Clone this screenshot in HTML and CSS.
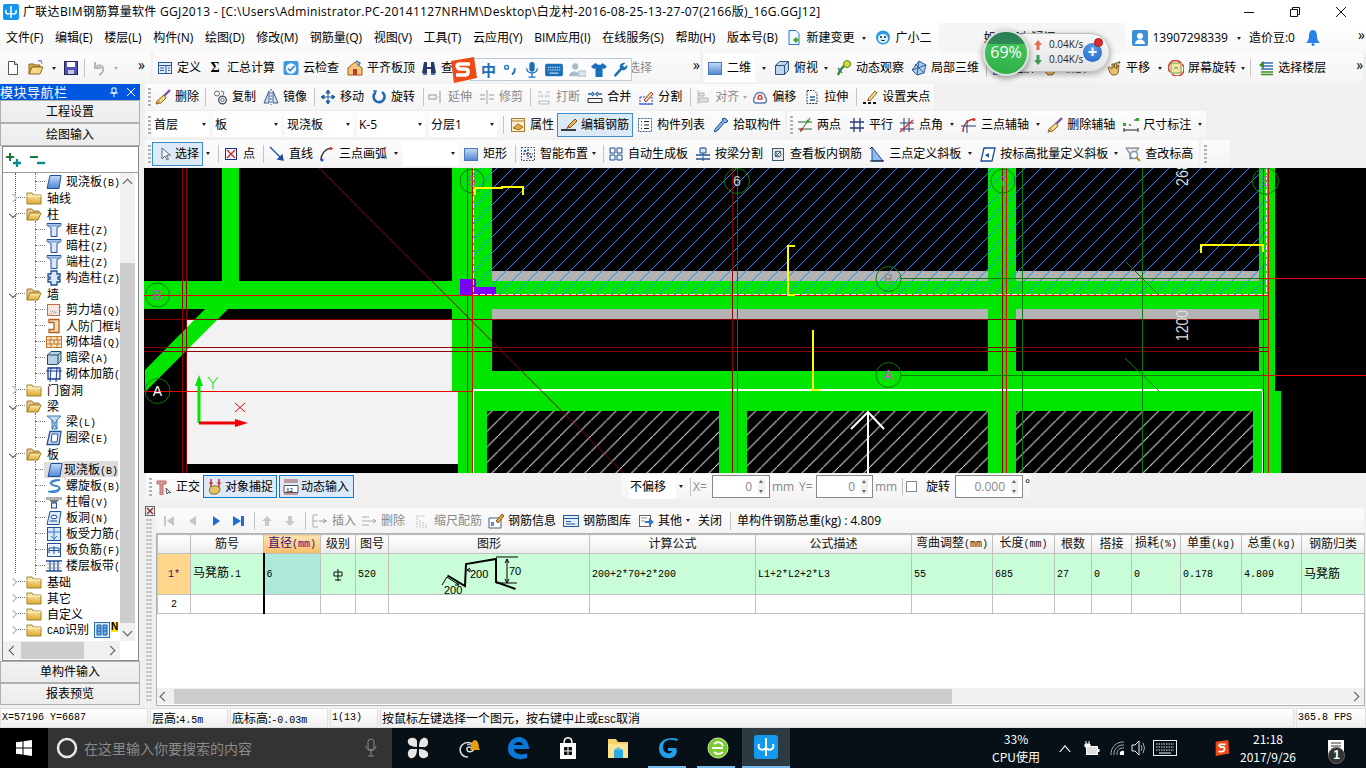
FILE: index.html
```html
<!DOCTYPE html>
<html lang="zh">
<head>
<meta charset="utf-8">
<title>广联达BIM钢筋算量软件 GGJ2013</title>
<link rel="stylesheet" href="styles.css">
</head>
<body>
<svg class="sprite" aria-hidden="true">
<defs>
<linearGradient id="gblue" x1="0" y1="0" x2="0" y2="1"><stop offset="0" stop-color="#c5dcf7"/><stop offset="1" stop-color="#4f86d0"/></linearGradient>
<linearGradient id="gfold" x1="0" y1="0" x2="0" y2="1"><stop offset="0" stop-color="#fdf0b0"/><stop offset="1" stop-color="#e0a830"/></linearGradient>
<pattern id="hb" width="16" height="16" patternUnits="userSpaceOnUse" x="2" y="7"><path d="M-1 17L17 -1" stroke="#1a8cff" stroke-width="1"/></pattern>
<pattern id="hw" width="15.5" height="15.5" patternUnits="userSpaceOnUse" x="2" y="2"><path d="M-1 16.5L16.5 -1" stroke="#d8d8d8" stroke-width="1"/></pattern>
<symbol id="new" viewBox="0 0 16 16"><path d="M3.5 1.5h6l3 3v10h-9z" fill="#fff" stroke="#555"/><path d="M9.5 1.5v3h3" fill="#ddd" stroke="#555"/></symbol>
<symbol id="open" viewBox="0 0 16 16"><path d="M1 4h5l1 1h5v2H4L1 14z" fill="#d9a93f" stroke="#8a6a20"/><path d="M4 7h11l-3 7H1z" fill="#f5d884" stroke="#8a6a20"/><path d="M10 1l3-.5 1 3" fill="none" stroke="#3a6fc0"/></symbol>
<symbol id="save" viewBox="0 0 16 16"><rect x="1.5" y="1.5" width="13" height="13" fill="#5252b8" stroke="#23235a"/><rect x="4" y="2" width="8" height="5" fill="#fff"/><rect x="5" y="10" width="6" height="4" fill="#c8c8dc"/></symbol>
<symbol id="undo" viewBox="0 0 16 16"><path d="M4 2v6h6" fill="none" stroke="#b8b8b8" stroke-width="2"/><path d="M4 8c4-5 9-2 8 2 0 2-2 4-4 5" fill="none" stroke="#b8b8b8" stroke-width="2"/></symbol>
<symbol id="def" viewBox="0 0 16 16"><rect x="1.5" y="2.5" width="13" height="11" fill="#e4eefa" stroke="#275a9c"/><path d="M2 5.5h12M9 6v7M3 8h4M3 10.5h4M11 8h2M11 10.5h2" stroke="#275a9c"/></symbol>
<symbol id="cloud" viewBox="0 0 16 16"><rect x="0.5" y="1" width="15" height="14" rx="2" fill="#3b98e2"/><circle cx="8" cy="8.5" r="5.2" fill="#eef6fd"/><path d="M5 8.5l2.2 2.2L11.5 6" fill="none" stroke="#2a80c8" stroke-width="1.6"/></symbol>
<symbol id="flat" viewBox="0 0 16 16"><path d="M1 8l7-6 7 6v7H1z" fill="#f4c777" stroke="#a05a12"/><path d="M6 9h4v6H6z" fill="#c0392b"/><path d="M9 1l4 2-2 3" fill="none" stroke="#3b7ac8" stroke-width="1.4"/></symbol>
<symbol id="bino" viewBox="0 0 16 16"><path d="M3 2h3v5h4V2h3l2 11h-5V9H6v4H1z" fill="#233a6a"/><path d="M2 13h4v2H2zM10 13h4v2h-4z" fill="#4d6da8"/></symbol>
<symbol id="sq" viewBox="0 0 16 16"><rect x="1.5" y="2.5" width="13" height="12" fill="url(#gblue)" stroke="#4b78b8"/></symbol>
<symbol id="box3" viewBox="0 0 16 16"><path d="M1.5 5.5l4-4h9v9l-4 4h-9z" fill="#bcd5f0" stroke="#33507a"/><path d="M1.5 5.5h9v9M10.5 5.5l4-4" fill="none" stroke="#33507a"/></symbol>
<symbol id="orbit" viewBox="0 0 16 16"><path d="M2 15C4 9 8 5 14 2" stroke="#3d8f1e" stroke-width="2.4" fill="none"/><circle cx="11" cy="4" r="3.5" fill="#e3d23c" stroke="#3d8f1e"/><path d="M2 8l4 5" stroke="#2a6fb8" stroke-width="1.5"/></symbol>
<symbol id="cube" viewBox="0 0 16 16"><path d="M8 1l7 4-2 8-7 2-5-5z" fill="#aacbeF" stroke="#2f5d99"/><path d="M8 1L6 15M1 10l14-5M4 4l9 9" stroke="#2f5d99" fill="none"/></symbol>
<symbol id="hand" viewBox="0 0 16 16"><path d="M3 10c-2-3 0-4 2-2l1 1V4h2v4l1-5h2l-1 6 2-4h1l-1 8c-1 2-3 2-5 2-2 0-3-2-4-5z" fill="#e8c16a" stroke="#7a5a20"/><path d="M13 1v3M11.5 2.5h3" stroke="#555"/></symbol>
<symbol id="scrot" viewBox="0 0 16 16"><rect x="3" y="3" width="10" height="10" fill="#f5e49c" stroke="#6aa04a"/><path d="M2 12A7 7 0 0 1 13 3" fill="none" stroke="#e0392b" stroke-width="1.5"/><path d="M14 4a7 7 0 0 1-10 10" fill="none" stroke="#e0392b" stroke-width="1.5"/><path d="M6 9l2-2 2 2" stroke="#3a7ac8" fill="none"/></symbol>
<symbol id="floors" viewBox="0 0 16 16"><path d="M3 3h12M3 6h12M3 9h12" stroke="#2f6fb8" stroke-width="1.6"/><path d="M3 12h12M3 14.5h12" stroke="#3d8f1e" stroke-width="1.6"/><path d="M6 1L1 5l5 4z" fill="#3d8f1e"/></symbol>
<symbol id="brush" viewBox="0 0 16 16"><path d="M15 1L8 8" stroke="#7a4fb0" stroke-width="2.4"/><path d="M9 6L2 12l-1 3 5-1 5-5z" fill="#f2d98a" stroke="#8a6a20"/><path d="M1 15l4-3" stroke="#c64" /></symbol>
<symbol id="copy" viewBox="0 0 16 16"><circle cx="5" cy="4.5" r="2.5" fill="none" stroke="#666"/><circle cx="10.5" cy="11" r="3.8" fill="none" stroke="#555" stroke-width="1.4"/><circle cx="10.5" cy="11" r="1.6" fill="none" stroke="#3d7ac0"/><path d="M9 2l3 1-1 3" fill="none" stroke="#3d7ac0"/></symbol>
<symbol id="mirror" viewBox="0 0 16 16"><path d="M6 2L1 14h5z" fill="#cfe0f3" stroke="#3a5d8a"/><path d="M10 2l5 12h-5z" fill="#cfe0f3" stroke="#3a5d8a"/><path d="M8 0v16" stroke="#3a5d8a" stroke-dasharray="2 1"/></symbol>
<symbol id="move" viewBox="0 0 16 16"><path d="M8 1v14M1 8h14M8 1L6 4h4zM8 15l-2-3h4zM1 8l3-2v4zM15 8l-3-2v4z" fill="#1f5f9e" stroke="#1f5f9e"/></symbol>
<symbol id="rot" viewBox="0 0 16 16"><path d="M11 3A5.5 5.5 0 1 1 4 4" fill="none" stroke="#1f67bb" stroke-width="2.6"/><path d="M2 1l4 .5L4.500 6z" fill="#1f67bb"/></symbol>
<symbol id="ext" viewBox="0 0 16 16"><path d="M1 6h7v4H1zM12 2v12" stroke="#b4b4b4" fill="none" stroke-width="1.4"/><path d="M8 8h3" stroke="#c8c8c8"/></symbol>
<symbol id="trim" viewBox="0 0 16 16"><path d="M1 6h5M1 10h5M10 6h5M10 10h5M8 1v14" stroke="#b8b8b8" stroke-width="1.3"/></symbol>
<symbol id="brk" viewBox="0 0 16 16"><path d="M2 3h4M10 3h4M3 12h10v3H3z" stroke="#b8b8b8" fill="none"/><path d="M2 7h3M11 7h3M5 5l2 2-2 2M11 5L9 7l2 2" stroke="#a8c0c0" fill="none"/></symbol>
<symbol id="merge" viewBox="0 0 16 16"><path d="M1 5h4M11 5h4M5 3l2 2-2 2M11 3L9 5l2 2" stroke="#1f5f9e" fill="none" stroke-width="1.4"/><path d="M1 9.500h14v4H1z" fill="none" stroke="#333"/></symbol>
<symbol id="split" viewBox="0 0 16 16"><path d="M2 8h12v7H2z" fill="#fff" stroke="#2255cc" stroke-dasharray="2 1"/><path d="M6 11L13 3l2 2-7 8z" fill="#f2d98a" stroke="#a33"/><path d="M1 15h14" stroke="#2255cc"/></symbol>
<symbol id="align" viewBox="0 0 16 16"><path d="M3 1v14M4 4h5v3H4zM4 9h9v4H4z" stroke="#b4b4b4" fill="#e3e3e3"/></symbol>
<symbol id="offset" viewBox="0 0 16 16"><path d="M3 8c0-6 10-6 10 0 2 1 2 6-1 6H4c-3 0-3-5-1-6z" fill="#fff" stroke="#5a7ba8" stroke-width="1.4"/><path d="M6 10c0-5 4-5 4 0H6z" fill="none" stroke="#d9453a" stroke-width="1.4"/></symbol>
<symbol id="stretch" viewBox="0 0 16 16"><path d="M3 1.500h7l3 3v10H3z" fill="#fff" stroke="#333" stroke-dasharray="2 1"/><path d="M6 8h5M6 11h5" stroke="#1f5f9e" stroke-width="1.3"/></symbol>
<symbol id="grips" viewBox="0 0 16 16"><path d="M6 10l7-8 2 2-7 8z" fill="#f2d98a" stroke="#8a6a20"/><path d="M1 14h3M6 14h3M11 14h3" stroke="#111" stroke-width="1.8"/><path d="M5 12l1-2 2 2z" fill="#c33"/></symbol>
<symbol id="prop" viewBox="0 0 16 16"><rect x="1.500" y="1.500" width="13" height="13" fill="#fbeed0" stroke="#b37a2b"/><path d="M1.500 4h13" stroke="#b37a2b"/><path d="M3 11l5-4 5 3-4 3z" fill="#e4ac46" stroke="#a06a18"/></symbol>
<symbol id="edit" viewBox="0 0 16 16"><path d="M7 9L14 2l2 2-7 7z" fill="#ecb84c" stroke="#7a5a20"/><path d="M0 13h15" stroke="#111" stroke-width="1.6"/><path d="M7 9l-2 3 3-1z" fill="#a33"/></symbol>
<symbol id="list" viewBox="0 0 16 16"><rect x="1.500" y="1.500" width="13" height="13" fill="#fff" stroke="#3a5d8a" stroke-dasharray="2 1"/><path d="M4 4.500h1M4 8h1M4 11.500h1M7 4.500h5M7 8h5M7 11.500h5" stroke="#222"/></symbol>
<symbol id="pick" viewBox="0 0 16 16"><path d="M12 1l3 3-2 2-1-1-7 8-3 2-1-1 2-3 7-8-1-1z" fill="#7ab0e8" stroke="#1f4f8e"/></symbol>
<symbol id="two" viewBox="0 0 16 16"><path d="M3 15L13 1M1 5h14M1 12h14" stroke="#2f5f2f"/><circle cx="4.500" cy="12.500" r="1.600" fill="#d33"/><circle cx="11" cy="4" r="1.600" fill="#3a3"/></symbol>
<symbol id="para" viewBox="0 0 16 16"><path d="M1 5h14M1 11h14M5 1v14M11 1v14" stroke="#233a7a" stroke-width="1.3"/></symbol>
<symbol id="ang" viewBox="0 0 16 16"><path d="M1 6h14M1 12h14M5 1v14M10 1v14" stroke="#233a7a"/><path d="M1 15L14 3" stroke="#d33" stroke-width="1.4"/></symbol>
<symbol id="aux3" viewBox="0 0 16 16"><path d="M2 15C2 8 6 3 13 2" fill="none" stroke="#c32" stroke-width="1.4"/><path d="M0 9h15M6 3v13" stroke="#233a7a"/><circle cx="13" cy="2.500" r="1.500" fill="#c32"/></symbol>
<symbol id="dim" viewBox="0 0 16 16"><path d="M1 11v4M15 11v4M1 13h14" stroke="#222"/><path d="M1 8h2M6 8h2M11 3h2" stroke="#222"/><rect x="13" y="1" width="3" height="3" fill="#3a3"/><rect x="0" y="6" width="3" height="3" fill="#3a3"/></symbol>
<symbol id="arrow" viewBox="0 0 16 16"><path d="M4 2l0 11 3-3 2 4 1.500-.8-2-4h4z" fill="#f4f4f4" stroke="#667"/></symbol>
<symbol id="pt" viewBox="0 0 16 16"><rect x="2.500" y="2.500" width="11" height="11" fill="#f7f7ff" stroke="#20308a"/><path d="M4 4l8 8M12 4l-8 8" stroke="#c22" stroke-width="1.3"/></symbol>
<symbol id="ln" viewBox="0 0 16 16"><path d="M1 1l13 13M14 14l-5-1 4-4z" stroke="#1d4f9a" fill="#1d4f9a" stroke-width="1.3"/></symbol>
<symbol id="arc" viewBox="0 0 16 16"><path d="M2 14C2 8 6 3 12 2" fill="none" stroke="#333" stroke-width="1.5"/><circle cx="3" cy="14" r="1.600" fill="#2255cc"/><circle cx="12" cy="2.500" r="1.600" fill="#d33"/></symbol>
<symbol id="smart" viewBox="0 0 16 16"><rect x="1.500" y="1.500" width="13" height="13" fill="#eef3fa" stroke="#333" stroke-dasharray="1.500 1.500"/><path d="M8 3v10M3 8h10" stroke="#111" stroke-dasharray="2 1"/><rect x="4" y="4" width="2" height="2" fill="#2a5a9c"/><rect x="10" y="10" width="2" height="2" fill="#2a5a9c"/></symbol>
<symbol id="auto" viewBox="0 0 16 16"><path d="M2 2h5v5H2zM9 2h5v5H9zM2 9h5v5H2zM9 9h5v5H9z" fill="#f2f6fc" stroke="#1f4f8e"/></symbol>
<symbol id="bsplit" viewBox="0 0 16 16"><path d="M1 9h14M1 13h14" stroke="#1f4f8e" stroke-width="1.5"/><path d="M8 1v15" stroke="#1f4f8e" stroke-dasharray="2 1"/><path d="M5 2h6v5H5z" fill="#d8e6f7" stroke="#1f4f8e"/></symbol>
<symbol id="view" viewBox="0 0 16 16"><rect x="2.500" y="2.500" width="11" height="12" fill="#e9edf0" stroke="#3a5a6a"/><path d="M5 11L11 5M5 5l4 6" stroke="#2f6f8a"/><circle cx="8" cy="8" r="3" fill="none" stroke="#555"/></symbol>
<symbol id="slope" viewBox="0 0 16 16"><path d="M3 1v14h11z" fill="#8fbaf0" stroke="#1d4f9a"/><path d="M3 1L1 3" stroke="#111"/><path d="M1 15h14" stroke="#111"/></symbol>
<symbol id="batch" viewBox="0 0 16 16"><path d="M4 2h11l-3 13H1z" fill="#fff" stroke="#1d4f9a" stroke-width="1.3"/><path d="M5 9l4-2v5z" fill="#1d4f9a"/></symbol>
<symbol id="chk" viewBox="0 0 16 16"><path d="M1 2h13L9 8v4L5 13V8z" fill="#e8e8ef" stroke="#666"/><circle cx="9" cy="9" r="3.500" fill="#fff" stroke="#7a94ad" stroke-width="1.400"/><path d="M11 11l4 4" stroke="#c08a30" stroke-width="2"/></symbol>
<symbol id="ortho" viewBox="0 0 16 16"><path d="M1 2h9v3H7v11H4V5H1z" fill="#d99a9a" stroke="#b86a6a"/><path d="M10 9l1 6 2-2 2 1z" fill="#eee" stroke="#555"/></symbol>
<symbol id="snap" viewBox="0 0 16 16"><path d="M4 0v9M12 0v9" stroke="#c82020" stroke-width="1.400"/><path d="M2 4h4M10 4h4" stroke="#c82020"/><path d="M3 9c0-3 10-3 10 1 0 3-2 5-5 5H5c-3-1-3-4-2-6z" fill="#e5c36a" stroke="#8a6a20"/></symbol>
<symbol id="dynin" viewBox="0 0 16 16"><path d="M1 1h14M1 15h14M1 3h14" stroke="#a04a4a"/><path d="M1 6.500h14v7H1z" fill="#fff" stroke="#555"/><text x="3" y="12.500" class="tiny">12</text></symbol>
<symbol id="nf" viewBox="0 0 16 16"><path d="M4 3h2v10H4zM14 3v10L7 8z" fill="#c5c5c5"/></symbol>
<symbol id="np" viewBox="0 0 16 16"><path d="M11 3v10L4 8z" fill="#c5c5c5"/></symbol>
<symbol id="nn" viewBox="0 0 16 16"><path d="M5 3v10l7-5z" fill="#1d6ed0"/></symbol>
<symbol id="nl" viewBox="0 0 16 16"><path d="M2 3v10l8-5zM10 3h3v10h-3z" fill="#1d6ed0"/></symbol>
<symbol id="up" viewBox="0 0 16 16"><path d="M8 3l5 5h-3v5H6V8H3z" fill="#c8c8c8"/></symbol>
<symbol id="down" viewBox="0 0 16 16"><path d="M8 13l5-5h-3V3H6v5H3z" fill="#c8c8c8"/></symbol>
<symbol id="ins" viewBox="0 0 16 16"><path d="M1 2h5M1 14h5M1 8h5M1 2v12" stroke="#aaa" fill="none"/><path d="M7 8h8M11 6l3 2-3 2" stroke="#999" fill="none"/></symbol>
<symbol id="del" viewBox="0 0 16 16"><path d="M1 4h7M1 12h7M1 8h14M12 6l3 2-3 2" stroke="#aaa" fill="none"/></symbol>
<symbol id="scale" viewBox="0 0 16 16"><path d="M3 3v12M6 7v8M9 9v6M12 11v4M3 3h8" stroke="#b5b5b5" stroke-dasharray="1.500 1"/></symbol>
<symbol id="info" viewBox="0 0 16 16"><path d="M1 5h12v10H1z" fill="#fff" stroke="#3a5d8a"/><path d="M8 8l6-7 2 2-6 7z" fill="#e3a63a" stroke="#7a5a20"/><path d="M3 9h3v4H3z" fill="#5a8fd0"/></symbol>
<symbol id="lib" viewBox="0 0 16 16"><rect x="0.500" y="2.500" width="15" height="11" fill="#e4eefa" stroke="#2a5a9c"/><path d="M1 5.500h14M3 8.500h5M3 11h9" stroke="#2a5a9c"/></symbol>
<symbol id="other" viewBox="0 0 16 16"><rect x="1.500" y="2.500" width="11" height="11" fill="#fff" stroke="#666"/><path d="M3 5h6M3 8h4" stroke="#888"/><path d="M7 8h4V5l5 4-5 4v-3H7z" fill="#2a78d0"/></symbol>
<symbol id="fc" viewBox="0 0 16 16"><path d="M1 3h5l1 2h8v9H1z" fill="url(#gfold)" stroke="#a08030"/><path d="M1 6h14" stroke="#fff8d0"/></symbol>
<symbol id="fo" viewBox="0 0 16 16"><path d="M1 3h5l1 2h6v2H4l-3 7z" fill="#e8c888" stroke="#a08030"/><path d="M4 7h11l-3 7H1z" fill="url(#gfold)" stroke="#a08030"/></symbol>
<symbol id="slab" viewBox="0 0 16 16"><path d="M4 1.500h11l-2 13H1z" fill="url(#gblue)" stroke="#1d4f9a"/></symbol>
<symbol id="col" viewBox="0 0 16 16"><path d="M1 1.500h14v2l-4 2v9H5v-9l-4-2z" fill="#dbe8f7" stroke="#1d4f9a"/><path d="M1 3.500h14" stroke="#7fa8d8" stroke-width="2"/></symbol>
<symbol id="gzz" viewBox="0 0 16 16"><path d="M5 1h6v3h3v3h-2v2h2v3h-3v3H5v-3H2V9h2V7H2V4h3z" fill="#dbe8f7" stroke="#1d4f9a" stroke-width="1.300"/></symbol>
<symbol id="shear" viewBox="0 0 16 16"><rect x="1.500" y="2.500" width="12" height="11" fill="#f4e8e0" stroke="#c07040"/><path d="M3 12l9-2M4 9l6 1" stroke="#999" stroke-dasharray="1 1"/><path d="M13 5h2M13 9h2" stroke="#c07040"/></symbol>
<symbol id="door" viewBox="0 0 16 16"><path d="M3 1.500h10v13H3v-3h5v-7H3z" fill="#f7dcc0" stroke="#b85f1a" stroke-width="1.300"/></symbol>
<symbol id="brick" viewBox="0 0 16 16"><rect x="0.500" y="2.500" width="15" height="11" fill="#f8e0c0" stroke="#c07a2c"/><path d="M1 6h14M1 10h14M5 3v3M11 3v3M8 6v4M4 6v4M12 6v4M5 10v3M11 10v3" stroke="#c07a2c"/></symbol>
<symbol id="dbeam" viewBox="0 0 16 16"><path d="M1.500 5L5 1.500h10V11l-3.500 3.500h-10z" fill="#bcd0e4" stroke="#1d4f6a"/><path d="M1.500 5H12v9M12 5l3-3" fill="none" stroke="#1d4f6a"/></symbol>
<symbol id="mas" viewBox="0 0 16 16"><path d="M2 2h12v11H2z" fill="#f4f4ff" stroke="#1d3f9a" stroke-width="1.300"/><path d="M0 5h16M5 1l-1 15M11 1l-1 15" stroke="#1d3f9a"/></symbol>
<symbol id="beam" viewBox="0 0 16 16"><path d="M1 2h14l-4 4v9H6V6z" fill="#bcdcf0" stroke="#3a78b8"/><path d="M6 6l5 9M11 6L6 15" stroke="#3a78b8"/></symbol>
<symbol id="ring" viewBox="0 0 16 16"><path d="M4 1.500h11l-2 13H1z" fill="#dbe8f7" stroke="#1d4f9a" stroke-width="1.300"/><path d="M6 4h6l-1 8H5z" fill="#fff" stroke="#1d4f9a"/></symbol>
<symbol id="spiral" viewBox="0 0 16 16"><path d="M14 2C7 1 2 4 5 6.500s8 1 8 3.500-6 3-11 3.500C6 15 13 15 14 11s-7-3-8-5 4-3 8-4z" fill="#5aa8e8" stroke="#1d6fb8"/></symbol>
<symbol id="cap" viewBox="0 0 16 16"><path d="M0 3h16v3H0z" fill="#b0b0b0"/><path d="M3 6h10l-3 3H6z" fill="#777"/><rect x="5.500" y="9" width="5" height="5" fill="#eef" stroke="#1d4f9a"/></symbol>
<symbol id="hole" viewBox="0 0 16 16"><path d="M4 1.500h11l-2 13H1z" fill="#dbe8f7" stroke="#1d4f9a"/><ellipse cx="8" cy="7" rx="3" ry="1.800" fill="#fff" stroke="#1d4f9a"/><path d="M4 11h7" stroke="#1d4f9a"/></symbol>
<symbol id="frc" viewBox="0 0 16 16"><rect x="1.500" y="1.500" width="13" height="13" fill="#dbe8f7" stroke="#1d4f9a"/><path d="M2 6h12M8 2v12M5 10l3 3 3-3" fill="none" stroke="#2a78d0"/></symbol>
<symbol id="neg" viewBox="0 0 16 16"><rect x="1.500" y="1.500" width="13" height="13" fill="#f0f5fc" stroke="#1d4f9a"/><path d="M3 6h10v5M3 6v5M3 8.500h10M8 4v8" fill="none" stroke="#1d4f9a"/></symbol>
<symbol id="strip" viewBox="0 0 16 16"><path d="M0 3h16M0 13h16M4 3v10M8 3v10M12 3v10" stroke="#1d4f9a" stroke-width="1.300"/><path d="M1 6h14M1 10h14" stroke="#99b"/></symbol>
<symbol id="cad" viewBox="0 0 16 16"><rect x="0.500" y="0.500" width="15" height="15" fill="#d9ecfb" stroke="#2a6fb8"/><path d="M3 3h4v10H3zM9 3h4v10H9zM3 6h4M3 9h4M9 6h4M9 9h4" fill="#6cb2ee" stroke="#1d5fa8"/></symbol>
</defs>
</svg>

<div class="title">
  <svg class="tlogo" viewBox="0 0 16 16"><rect width="16" height="16" rx="2" fill="#1296f0"/><path d="M8 2v12M3 6c-1 4 2 5 5 3 3 2 6 1 5-3" fill="none" stroke="#fff" stroke-width="1.500"/></svg>
  <span class="ttext">广联达BIM钢筋算量软件 GGJ2013 - [C:\Users\Administrator.PC-20141127NRHM\Desktop\白龙村-2016-08-25-13-27-07(2166版)_16G.GGJ12]</span>
  <span class="wbtns">
    <svg class="wb" viewBox="0 0 10 10"><path d="M0 5.500h10" stroke="#111"/></svg>
    <svg class="wb" viewBox="0 0 10 10"><path d="M0.500 2.500h7v7h-7zM2.500 2.500V.5h7v7h-2" fill="none" stroke="#111"/></svg>
    <svg class="wb" viewBox="0 0 10 10"><path d="M0 0l10 10M10 0L0 10" stroke="#111"/></svg>
  </span>
</div>

<div class="menubar">
  <span class="mi">文件(F)</span><span class="mi">编辑(E)</span><span class="mi">楼层(L)</span><span class="mi">构件(N)</span><span class="mi">绘图(D)</span><span class="mi">修改(M)</span><span class="mi">钢筋量(Q)</span><span class="mi">视图(V)</span><span class="mi">工具(T)</span><span class="mi">云应用(Y)</span><span class="mi">BIM应用(I)</span><span class="mi">在线服务(S)</span><span class="mi">帮助(H)</span><span class="mi">版本号(B)</span>
  <span class="t mnew"><svg class="i" viewBox="0 0 16 16"><path d="M3 .5h7l3 3v11H3z" fill="#f4f9ff" stroke="#2a78c8"/><path d="M10 7l3 3-3 3-3-3z" fill="#4faa2e"/></svg>新建变更</span>
  <i class="dd m8"></i>
  <span class="t m9"><svg class="i" viewBox="0 0 16 16"><circle cx="8" cy="7.500" r="7" fill="#2a9ae8"/><ellipse cx="8" cy="8.500" rx="5" ry="4.500" fill="#dff2ff"/><circle cx="6" cy="7" r="1" fill="#123"/><circle cx="10" cy="7" r="1" fill="#123"/><path d="M6 10q2 1.500 4 0" stroke="#123" fill="none"/></svg>广小二</span>
  <span class="graybk">如果您有疑问</span>
  <span class="t acct"><svg class="i" viewBox="0 0 16 16"><rect width="16" height="16" rx="2" fill="#3f8fd8"/><circle cx="8" cy="6" r="3" fill="#fff"/><path d="M3 14c0-6 10-6 10 0z" fill="#fff"/></svg>13907298339</span>
  <i class="dd m9"></i>
  <span class="m8">造价豆:0</span>
  <svg class="i m10" viewBox="0 0 16 16"><path d="M8 0c3 0 4 3 4 6 0 3 1 5 3 7H1c2-2 3-4 3-7 0-3 1-6 4-6z" fill="#2a82e4"/><circle cx="8" cy="14.500" r="1.500" fill="#2a82e4"/></svg>
  <span class="more m37">»</span>
</div>

<div class="tb1">
  <div class="seg s1">
    <svg class="i"><use href="#new"/></svg>
    <svg class="i m7"><use href="#open"/></svg>
    <i class="dd m8"></i>
    <svg class="i m7"><use href="#save"/></svg>
    <i class="sep m5"></i>
    <svg class="i m6"><use href="#undo"/></svg>
    <i class="dd gd m7"></i>
    <span class="more m20">»</span>
  </div>
  <div class="seg s2">
    <span class="t"><svg class="i"><use href="#def"/></svg>定义</span>
    <span class="t m6"><b class="sig">Σ</b>汇总计算</span>
    <span class="t m8"><svg class="i"><use href="#cloud"/></svg>云检查</span>
    <span class="t m8"><svg class="i"><use href="#flat"/></svg>平齐板顶</span>
    <span class="t m6"><svg class="i"><use href="#bino"/></svg>查找图元</span>
    <span class="t off m95"><svg class="i"><use href="#arrow"/></svg>批量选择</span>
    <span class="more m41">»</span>
  </div>
  <div class="seg s3">
    <span class="t act"><svg class="i"><use href="#sq"/></svg>二维</span>
    <i class="dd m7"></i>
    <span class="t m8"><svg class="i"><use href="#box3"/></svg>俯视</span>
    <i class="dd m6"></i>
    <span class="t m8"><svg class="i"><use href="#orbit"/></svg>动态观察</span>
    <span class="t m7"><svg class="i"><use href="#cube"/></svg>局部三维</span>
    <i class="sep m7"></i>
    <span class="t m5"><svg class="i"><use href="#sq"/></svg>全屏</span>
    <span class="t m6"><svg class="i"><use href="#hand"/></svg>缩放</span>
    <span class="t m20"><svg class="i"><use href="#hand"/></svg>平移</span>
    <i class="dd m8"></i>
    <span class="t m6"><svg class="i"><use href="#scrot"/></svg>屏幕旋转</span>
    <i class="dd m5"></i>
    <i class="sep m5"></i>
    <span class="t m7"><svg class="i"><use href="#floors"/></svg>选择楼层</span>
    <span class="more m30">»</span>
  </div>
</div>

<div class="main">
  <aside class="side">
    <div class="sidehead"><span class="shtitle">模块导航栏</span><svg class="pin" viewBox="0 0 10 10"><path d="M3 1h4v5H3zM1 6h8M5 6v4" fill="none" stroke="#fff"/></svg><svg class="pin" viewBox="0 0 10 10"><path d="M1 1l8 8M9 1L1 9" stroke="#fff"/></svg></div>
    <div class="sbtn">工程设置</div>
    <div class="sbtn">绘图输入</div>
    <div class="tpanel">
      <div class="ttool">
        <svg class="plus" viewBox="0 0 16 16"><path d="M4 1v8M0 5h8" stroke="#1a7a3a" stroke-width="2"/><path d="M11 7v8M7 11h8" stroke="#0a8a8a" stroke-width="2.400"/></svg>
        <svg class="plus" viewBox="0 0 16 16"><path d="M0 5h8" stroke="#1a7a3a" stroke-width="2"/><path d="M7 11h8" stroke="#0a8a8a" stroke-width="2.400"/></svg>
      </div>
      <div class="tbody">
        <div class="tree">
          <div class="r c"><svg class="i"><use href="#slab"/></svg><span class="lb">现浇板<u>(B)</u></span></div>
          <div class="r"><i class="ch"></i><svg class="i"><use href="#fc"/></svg><span class="lb">轴线</span></div>
          <div class="r"><i class="ch o"></i><svg class="i"><use href="#fo"/></svg><span class="lb">柱</span></div>
          <div class="r c"><svg class="i"><use href="#col"/></svg><span class="lb">框柱<u>(Z)</u></span></div>
          <div class="r c"><svg class="i"><use href="#col"/></svg><span class="lb">暗柱<u>(Z)</u></span></div>
          <div class="r c"><svg class="i"><use href="#col"/></svg><span class="lb">端柱<u>(Z)</u></span></div>
          <div class="r c"><svg class="i"><use href="#gzz"/></svg><span class="lb">构造柱<u>(Z)</u></span></div>
          <div class="r"><i class="ch o"></i><svg class="i"><use href="#fo"/></svg><span class="lb">墙</span></div>
          <div class="r c"><svg class="i"><use href="#shear"/></svg><span class="lb">剪力墙<u>(Q)</u></span></div>
          <div class="r c"><svg class="i"><use href="#door"/></svg><span class="lb">人防门框墙</span></div>
          <div class="r c"><svg class="i"><use href="#brick"/></svg><span class="lb">砌体墙<u>(Q)</u></span></div>
          <div class="r c"><svg class="i"><use href="#dbeam"/></svg><span class="lb">暗梁<u>(A)</u></span></div>
          <div class="r c"><svg class="i"><use href="#mas"/></svg><span class="lb">砌体加筋<u>(Y)</u></span></div>
          <div class="r"><i class="ch"></i><svg class="i"><use href="#fc"/></svg><span class="lb">门窗洞</span></div>
          <div class="r"><i class="ch o"></i><svg class="i"><use href="#fo"/></svg><span class="lb">梁</span></div>
          <div class="r c"><svg class="i"><use href="#beam"/></svg><span class="lb">梁<u>(L)</u></span></div>
          <div class="r c"><svg class="i"><use href="#ring"/></svg><span class="lb">圈梁<u>(E)</u></span></div>
          <div class="r"><i class="ch o"></i><svg class="i"><use href="#fo"/></svg><span class="lb">板</span></div>
          <div class="r c s"><svg class="i"><use href="#slab"/></svg><span class="lb">现浇板<u>(B)</u></span></div>
          <div class="r c"><svg class="i"><use href="#spiral"/></svg><span class="lb">螺旋板<u>(B)</u></span></div>
          <div class="r c"><svg class="i"><use href="#cap"/></svg><span class="lb">柱帽<u>(V)</u></span></div>
          <div class="r c"><svg class="i"><use href="#hole"/></svg><span class="lb">板洞<u>(N)</u></span></div>
          <div class="r c"><svg class="i"><use href="#frc"/></svg><span class="lb">板受力筋<u>(S)</u></span></div>
          <div class="r c"><svg class="i"><use href="#neg"/></svg><span class="lb">板负筋<u>(F)</u></span></div>
          <div class="r c"><svg class="i"><use href="#strip"/></svg><span class="lb">楼层板带<u>(H)</u></span></div>
          <div class="r"><i class="ch"></i><svg class="i"><use href="#fc"/></svg><span class="lb">基础</span></div>
          <div class="r"><i class="ch"></i><svg class="i"><use href="#fc"/></svg><span class="lb">其它</span></div>
          <div class="r"><i class="ch"></i><svg class="i"><use href="#fc"/></svg><span class="lb">自定义</span></div>
          <div class="r"><i class="ch"></i><svg class="i"><use href="#fc"/></svg><span class="lb"><u>CAD</u>识别</span><svg class="i cadi"><use href="#cad"/></svg><span class="nw">N</span></div>
        </div>
        <div class="vbar"><i class="ar u"></i><div class="vtrack"><div class="vthumb"></div></div><i class="ar d"></i></div>
      </div>
      <div class="hbar"><i class="ar l"></i><div class="hthumb"></div><i class="ar r2"></i></div>
    </div>
    <div class="sbtn b">单构件输入</div>
    <div class="sbtn b">报表预览</div>
  </aside>

  <div class="right">
    <div class="tb2">
      <div class="seg">
        <i class="grip"></i>
        <span class="t m4"><svg class="i"><use href="#brush"/></svg>删除</span>
        <i class="sep m6"></i>
        <span class="t m6"><svg class="i"><use href="#copy"/></svg>复制</span>
        <span class="t m7"><svg class="i"><use href="#mirror"/></svg>镜像</span>
        <i class="sep m7"></i>
        <span class="t m5"><svg class="i"><use href="#move"/></svg>移动</span>
        <span class="t m7"><svg class="i"><use href="#rot"/></svg>旋转</span>
        <i class="sep m8"></i>
        <span class="t off m4"><svg class="i"><use href="#ext"/></svg>延伸</span>
        <span class="t off m7"><svg class="i"><use href="#trim"/></svg>修剪</span>
        <i class="sep m7"></i>
        <span class="t off m5"><svg class="i"><use href="#brk"/></svg>打断</span>
        <span class="t m7"><svg class="i"><use href="#merge"/></svg>合并</span>
        <span class="t m7"><svg class="i"><use href="#split"/></svg>分割</span>
        <i class="sep m8"></i>
        <span class="t off m4"><svg class="i"><use href="#align"/></svg>对齐</span>
        <i class="dd gd m4"></i>
        <span class="t m5"><svg class="i"><use href="#offset"/></svg>偏移</span>
        <span class="t m8"><svg class="i"><use href="#stretch"/></svg>拉伸</span>
        <i class="sep m8"></i>
        <span class="t m5"><svg class="i"><use href="#grips"/></svg>设置夹点</span>
      </div>
    </div>
    <div class="tb3">
      <div class="seg">
        <i class="grip"></i>
        <span class="combo cw1 m1">首层<i class="dd"></i></span>
        <span class="combo cw2 m4">板<i class="dd"></i></span>
        <span class="combo cw2 m4">现浇板<i class="dd"></i></span>
        <span class="combo cw2 m4">K-5<i class="dd"></i></span>
        <span class="combo cw2 m4">分层1<i class="dd"></i></span>
        <i class="sep m6"></i>
        <span class="t m6"><svg class="i"><use href="#prop"/></svg>属性</span>
        <span class="t box m3"><svg class="i"><use href="#edit"/></svg>编辑钢筋</span>
        <span class="t m4"><svg class="i"><use href="#list"/></svg>构件列表</span>
        <span class="t m8"><svg class="i"><use href="#pick"/></svg>拾取构件</span>
      </div>
      <div class="seg m2">
        <i class="grip"></i>
        <span class="t m4"><svg class="i"><use href="#two"/></svg>两点</span>
        <span class="t m8"><svg class="i"><use href="#para"/></svg>平行</span>
        <span class="t m6"><svg class="i"><use href="#ang"/></svg>点角</span>
        <i class="dd m7"></i>
        <span class="t m7"><svg class="i"><use href="#aux3"/></svg>三点辅轴</span>
        <i class="dd m7"></i>
        <span class="t m7"><svg class="i"><use href="#brush"/></svg>删除辅轴</span>
        <span class="t m8"><svg class="i"><use href="#dim"/></svg>尺寸标注</span>
        <i class="dd m7"></i>
      </div>
    </div>
    <div class="tb4">
      <div class="seg">
        <i class="grip"></i>
        <span class="t box sel m1"><svg class="i"><use href="#arrow"/></svg>选择</span>
        <i class="dd m3"></i>
        <i class="sep m8"></i>
        <span class="t m4"><svg class="i"><use href="#pt"/></svg>点</span>
        <i class="sep m8"></i>
        <span class="t m5"><svg class="i"><use href="#ln"/></svg>直线</span>
        <span class="t m6"><svg class="i"><use href="#arc"/></svg>三点画弧</span>
        <i class="dd m7"></i>
        <span class="combo cw3 m5"><i class="dd"></i></span>
        <span class="t m5"><svg class="i"><use href="#sq"/></svg>矩形</span>
        <i class="sep m8"></i>
        <span class="t m4"><svg class="i"><use href="#smart"/></svg>智能布置</span>
        <i class="dd m4"></i>
        <i class="sep m7"></i>
        <span class="t m4"><svg class="i"><use href="#auto"/></svg>自动生成板</span>
        <span class="t m7"><svg class="i"><use href="#bsplit"/></svg>按梁分割</span>
        <span class="t m7"><svg class="i"><use href="#view"/></svg>查看板内钢筋</span>
        <span class="t m7"><svg class="i"><use href="#slope"/></svg>三点定义斜板</span>
        <i class="dd m7"></i>
        <span class="t m8"><svg class="i"><use href="#batch"/></svg>按标高批量定义斜板</span>
        <i class="dd m6"></i>
        <span class="t m7"><svg class="i"><use href="#chk"/></svg>查改标高</span>
      </div>
      <div class="seg m2 gripseg"><i class="grip"></i></div>
    </div>

    <svg class="canvas" viewBox="144 168 1222 305" shape-rendering="crispEdges">
      <rect x="144" y="168" width="1222" height="305" fill="#000"/>
      <rect x="187" y="320" width="271" height="144" fill="#f2f2f2"/>
      <g fill="#00e600">
        <rect x="222" y="168" width="17" height="113"/>
        <rect x="144" y="281" width="1115" height="28"/>
        <rect x="452" y="168" width="40" height="223"/>
        <rect x="988" y="168" width="28" height="305"/>
        <rect x="1259" y="168" width="16" height="223"/>
        <rect x="452" y="371" width="823" height="20"/>
        <rect x="458" y="391" width="823" height="82"/>
        <polygon points="205,309 228,309 145,392 145,370" shape-rendering="auto"/>
      </g>
      <g fill="#000">
        <rect x="487" y="411" width="232" height="62"/>
        <rect x="747" y="411" width="241" height="62"/>
        <rect x="1016" y="411" width="237" height="62"/>
      </g>
      <g fill="#b3b3b3">
        <rect x="492" y="271" width="496" height="10"/>
        <rect x="1016" y="271" width="243" height="10"/>
        <rect x="492" y="309" width="496" height="10"/>
        <rect x="1016" y="309" width="243" height="10"/>
      </g>
      <g shape-rendering="auto">
        <rect x="487" y="411" width="232" height="62" fill="url(#hw)"/>
        <rect x="747" y="411" width="241" height="62" fill="url(#hw)"/>
        <rect x="1016" y="411" width="237" height="62" fill="url(#hw)"/>
        <rect x="473" y="168" width="793" height="127" fill="url(#hb)"/>
      </g>
      <rect x="460" y="279" width="16" height="16" fill="#7a00ff"/>
      <rect x="476" y="287" width="20" height="8" fill="#7a00ff"/>
      <g stroke="#fff" stroke-width="1" fill="none">
        <path d="M473 168V295M1266 168V295M473 294.500H1266" stroke-dasharray="5 2"/>
        <path d="M473 390H1262" stroke-width="2"/>
        <path d="M473.500 391V473M1262.500 391V473"/>
      </g>
      <g stroke="#8b0000" stroke-width="1" fill="none">
        <path d="M182.500 168V473M186.500 168V473M467.500 168V473M732.500 168V473M1002.500 168V473M1263.500 168V473"/>
        <path d="M144 319.500H1268M144 347.500H1268M144 351.500H1268"/>
        <path d="M319 168L623.500 473" shape-rendering="auto"/>
      </g>
      <g stroke="#e60000" stroke-width="1" fill="none">
        <path d="M472.500 168V473M737.500 168V473M1006.500 168V473M1268.500 168V473"/>
        <path d="M144 295.500H1268M144 391.500H473M1262 278.500H1366M1262 375.500H1366"/>
      </g>
      <g stroke="#0a7a0a" stroke-width="1" fill="none">
        <path d="M1022.500 168V473M1142.500 168V473M901 278.500H1262M901 375.500H1262"/>
        <path d="M1126 262L1159 295M1125 358L1160 392" shape-rendering="auto"/>
      </g>
      <g stroke="#0a7a0a" fill="none" shape-rendering="auto">
        <circle cx="157.500" cy="295" r="12"/><circle cx="157.500" cy="391" r="12.500"/>
        <circle cx="472" cy="181" r="12"/><circle cx="737" cy="181" r="12.500"/>
        <circle cx="1003" cy="181" r="12"/><circle cx="1265.500" cy="181" r="13"/>
        <circle cx="888.500" cy="279" r="12.500"/><circle cx="888.500" cy="375" r="12.500"/>
      </g>
      <g shape-rendering="auto" class="axl">
        <text x="157.500" y="300" fill="#a060a0">B</text>
        <text x="157.500" y="396" fill="#fff">A</text>
        <text x="472" y="186" fill="#a060a0">5</text>
        <text x="737" y="186" fill="#ccc">6</text>
        <text x="1003" y="186" fill="#808090">7</text>
        <text x="1265.500" y="186" fill="#a060a0">8</text>
        <text x="888.500" y="284" fill="#888">B</text>
        <text x="888.500" y="380" fill="#e040e0">A</text>
      </g>
      <g fill="none" stroke="#ffff00" stroke-width="2">
        <path d="M475 195V188H502V187H523V195"/>
        <path d="M795 246H787.500V295H795"/>
        <path d="M812.500 330V390H820"/>
        <path d="M1201 253V245H1262.500V252"/>
      </g>
      <g shape-rendering="auto" class="dimt" fill="#ddd">
        <text transform="translate(1188 341) rotate(-90)" textLength="31" lengthAdjust="spacingAndGlyphs">1200</text>
        <text transform="translate(1188 186) rotate(-90)" textLength="24" lengthAdjust="spacingAndGlyphs">268</text>
      </g>
      <path d="M868 473V412M851 429L868 412L884 429" fill="none" stroke="#fff" stroke-width="2" shape-rendering="auto"/>
      <g shape-rendering="auto">
        <path d="M197.500 423V386H195L199 375L203 386H200.500V423z" fill="#00e600"/>
        <path d="M199 421.500H235V419L248 423L235 427V424.500H199z" fill="#f00000"/>
        <path d="M208 377L213 383L218 377M213 383V389" stroke="#00e600" fill="none"/>
        <path d="M235 403L245 412M245 403L235 412" stroke="#f00000" fill="none"/>
      </g>
    </svg>

    <div class="snapbar">
      <div class="seg snapL">
        <i class="grip"></i>
        <span class="t m4"><svg class="i"><use href="#ortho"/></svg>正交</span>
        <span class="t blu m3"><svg class="i"><use href="#snap"/></svg>对象捕捉</span>
        <span class="t blu"><svg class="i"><use href="#dynin"/></svg>动态输入</span>
      </div>
      <div class="seg snapR">
        <span class="combo cw4">不偏移</span>
        <i class="dd m3"></i>
        <i class="sep m7"></i>
        <span class="gt lx m2">X=</span>
        <span class="inp iw1">0<i class="spin"></i></span>
        <span class="gt lm m2">mm</span>
        <span class="gt ly">Y=</span>
        <span class="inp iw2">0<i class="spin"></i></span>
        <span class="gt lm2 m2">mm</span>
        <i class="sep"></i>
        <i class="cb m3"></i>
        <span class="m9">旋转</span>
        <span class="inp iw3 m5">0.000<i class="spin"></i></span>
        <span class="deg m2">°</span>
      </div>
    </div>

    <div class="gridpanel">
      <div class="gleft"><svg class="gx" viewBox="0 0 10 10"><rect x=".5" y=".5" width="9" height="9" fill="#eee" stroke="#666"/><path d="M2 2l6 6M8 2L2 8" stroke="#833" stroke-width="1.500"/></svg><i class="gdots"></i></div>
      <div class="gmain">
        <div class="seg gtb">
          <svg class="i"><use href="#nf"/></svg>
          <svg class="i m9"><use href="#np"/></svg>
          <svg class="i m7"><use href="#nn"/></svg>
          <svg class="i m7"><use href="#nl"/></svg>
          <i class="sep m7"></i>
          <svg class="i m4"><use href="#up"/></svg>
          <svg class="i m7"><use href="#down"/></svg>
          <i class="sep m7"></i>
          <span class="t off m6"><svg class="i"><use href="#ins"/></svg>插入</span>
          <span class="t off m5"><svg class="i"><use href="#del"/></svg>删除</span>
          <span class="t off m9"><svg class="i"><use href="#scale"/></svg>缩尺配筋</span>
          <span class="t m6"><svg class="i"><use href="#info"/></svg>钢筋信息</span>
          <span class="t m7"><svg class="i"><use href="#lib"/></svg>钢筋图库</span>
          <span class="t m7"><svg class="i"><use href="#other"/></svg>其他</span>
          <i class="dd m4"></i>
          <span class="m8">关闭</span>
          <i class="sep m8"></i>
          <span class="m6">单构件钢筋总重(kg) : 4.809</span>
        </div>
        <div class="gbox">
          <table class="grid">
            <thead>
              <tr><th></th><th>筋号</th><th class="ah">直径<u>(mm)</u></th><th>级别</th><th>图号</th><th>图形</th><th>计算公式</th><th>公式描述</th><th>弯曲调整<u>(mm)</u></th><th>长度<u>(mm)</u></th><th>根数</th><th>搭接</th><th>损耗<u>(%)</u></th><th>单重<u>(kg)</u></th><th>总重<u>(kg)</u></th><th>钢筋归类</th></tr>
            </thead>
            <tbody>
              <tr class="r1">
                <th class="rh"><u>1*</u></th><td>马凳筋<u>.1</u></td><td class="cur"><u>6</u></td><td class="ctr">
                  <svg class="gb" viewBox="0 0 12 12"><path d="M2 3h8v4H2zM6 0v12M3 11h6" fill="none" stroke="#111"/></svg></td><td><u>520</u></td>
                <td class="fig"><svg class="shape" viewBox="388 553 201 40"><path d="M446.500 574.500L464 585L465 563L495 558V581L514.500 588" fill="none" stroke="#000" stroke-width="2"/><path d="M495 556H517M495 582H516M506 558V582M504 562l2-4 2 4M504 578l2 4 2-4M466 569H470M466 569l3-2M466 569l3 2M441 584L446 576" stroke="#000" fill="none"/><path d="M446 576l12 8M458 584l-2-3M458 584l-4 0" stroke="#000" fill="none"/><text x="443" y="593" class="sn">200</text><text x="469" y="577" class="sn">200</text><text x="508" y="574" class="sn">70</text></svg></td>
                <td><u>200+2*70+2*200</u></td><td><u>L1+2*L2+2*L3</u></td><td><u>55</u></td><td><u>685</u></td><td><u>27</u></td><td><u>0</u></td><td><u>0</u></td><td><u>0.178</u></td><td><u>4.809</u></td><td>马凳筋</td>
              </tr>
              <tr class="r2">
                <th class="rh2"><u>2</u></th><td></td><td class="cur2"></td><td></td><td></td><td></td><td></td><td></td><td></td><td></td><td></td><td></td><td></td><td></td><td></td><td></td>
              </tr>
            </tbody>
          </table>
          <div class="gsp"></div>
          <div class="gscroll"><i class="ar l"></i><div class="gthumb"></div><i class="ar r2"></i></div>
        </div>
      </div>
    </div>
  </div>
</div>

<div class="status">
  <span class="sc w1">X=57196 Y=6687</span>
  <span class="sc w2">层高:<u>4.5m</u></span>
  <span class="sc w3">底标高:<u>-0.03m</u></span>
  <span class="sc w4">1(13)</span>
  <span class="sc w5">按鼠标左键选择一个图元，按右键中止或<u>ESC</u>取消</span>
  <span class="sc w6">365.8 FPS</span>
</div>

<div class="taskbar">
  <div class="start"><svg class="win" viewBox="0 0 16 16"><path d="M0 2.300L6.500 1.400V7.600H0zM7.500 1.300L16 0V7.600H7.500zM0 8.400H6.500V14.600L0 13.700zM7.500 8.400H16V16L7.500 14.700z" fill="#fff"/></svg></div>
  <div class="search">
    <svg class="cort" viewBox="0 0 22 22"><circle cx="11" cy="11" r="9" fill="none" stroke="#e8e8e8" stroke-width="2.500"/></svg>
    <span class="stxt">在这里输入你要搜索的内容</span>
    <svg class="mic" viewBox="0 0 14 20"><rect x="4" y="1" width="6" height="11" rx="3" fill="none" stroke="#888"/><path d="M2 8c0 6 10 6 10 0M7 13v5M4 18h6" fill="none" stroke="#888"/></svg>
  </div>
  <div class="apps">
    <svg class="ap" viewBox="0 0 24 24"><path d="M11 11C3 11 1 7 2 4c2-3 8-3 9 1zM13 11c0-8 4-10 7-9 3 2 3 8-1 9zM13 13c8 0 10 4 9 7-2 3-8 3-9-1zM11 13c0 8-4 10-7 9-3-2-3-8 1-9z" fill="#e6e6e6"/></svg>
    <svg class="ap" viewBox="0 0 24 24"><path d="M12 21C5 21 2 14 6 9c4-4 12-3 12 3 0 4-6 5-7 2s3-4 4-2" fill="none" stroke="#ddd" stroke-width="1.500"/><path d="M11 9c3-1 6 0 7 3" fill="none" stroke="#fff"/><path d="M15 12c0-5 2-8 4-8s4 3 4 8l1 2H14z" fill="#e8a00a"/></svg>
    <svg class="ap" viewBox="0 0 24 24"><path d="M2 13C2 5 8 1 13 1c6 0 10 5 10 12H8c0 5 8 7 13 4v5c-8 3-19 0-19-9zM8 9h9c0-4-8-4-9 0z" fill="#0a78d7"/></svg>
    <svg class="ap" viewBox="0 0 24 24"><path d="M4 7h16v16H4z" fill="#fff"/><path d="M8 7c0-7 8-7 8 0" fill="none" stroke="#fff" stroke-width="1.500"/><path d="M8 11h3.500v3.500H8zM12.500 11H16v3.500h-3.500zM8 15.500h3.500V19H8zM12.500 15.500H16V19h-3.500z" fill="#111"/></svg>
    <svg class="ap" viewBox="0 0 24 24"><path d="M2 3h8l2 3h10v16H2z" fill="#f4d36a"/><path d="M2 8h20v14H2z" fill="#fbe48e"/><rect x="8" y="14" width="9" height="8" fill="#2fa7e0"/><path d="M8 14l4-3 5 3z" fill="#4fc3f0"/></svg>
    <svg class="ap" viewBox="0 0 24 24"><path d="M22 3C14 0 3 3 3 12s7 11 12 10c5-1 7-6 5-10h-8v3h4c-1 4-9 3-9-4s7-9 14-6z" fill="#1fa0e8"/></svg>
    <svg class="ap" viewBox="0 0 24 24"><circle cx="12" cy="12" r="10" fill="#7ac832" stroke="#c8f090"/><path d="M6 12h11M8 8c3-3 8-2 9 2M8 16c3 3 7 2 9 0" fill="none" stroke="#fff" stroke-width="2"/></svg>
    <div class="active"><svg class="ap0" viewBox="0 0 24 24"><rect width="24" height="24" rx="3" fill="#119af0"/><path d="M12 3v18M5 9c-2 6 4 7 7 4 3 3 9 2 7-4" fill="none" stroke="#fff" stroke-width="2"/></svg></div>
  </div>
  <div class="tray">
    <div class="cpu"><span>33%</span><span>CPU使用</span></div>
    <svg class="tr m12" viewBox="0 0 16 10"><path d="M2 9l6-7 6 7" fill="none" stroke="#fff" stroke-width="1.300"/></svg>
    <svg class="tr2 m10" viewBox="0 0 18 16"><path d="M4 1v3M7 1v3M3 4h5v3H3z" fill="#fff" stroke="#fff"/><rect x="4.500" y="6.500" width="11" height="8" fill="#ddd" stroke="#fff"/><rect x="16" y="9" width="1.500" height="3" fill="#fff"/></svg>
    <svg class="tr2 m8" viewBox="0 0 18 18"><path d="M3 16a12 12 0 0 1 13-13M6 16a9 9 0 0 1 10-10M9 16a6 6 0 0 1 7-7" fill="none" stroke="#aaa"/><path d="M12 16a3 3 0 0 1 4-4v4z" fill="#fff"/></svg>
    <svg class="tr2 m4" viewBox="0 0 18 18"><path d="M2 6h3l4-4v14l-4-4H2z" fill="none" stroke="#eee"/><path d="M11 6q2 3 0 6M13 4q3 5 0 10" fill="none" stroke="#aaa"/></svg>
    <svg class="kb m5" viewBox="0 0 24 16"><rect x=".5" y=".5" width="23" height="15" fill="none" stroke="#eee"/><path d="M3 4h18M3 7h18M3 10h18" stroke="#eee" stroke-dasharray="1.500 1"/><path d="M6 13h12" stroke="#eee"/></svg>
    <svg class="tr2 m36" viewBox="0 0 18 20"><path d="M2 3l14-2 1 15-15 3z" fill="#ef4a15"/><path d="M13 6H7c-2 0-1 3 1 3h2c3 0 2 5-1 5H5" fill="none" stroke="#fff" stroke-width="2"/></svg>
    <div class="clock m2"><span>21:18</span><span>2017/9/26</span></div>
    <div class="notif"><svg class="nic" viewBox="0 0 16 16"><path d="M0 0h16v12H4l-4 4z" fill="#fff"/><path d="M3 3h10M3 6h10M3 9h7" stroke="#333"/></svg><b class="badge">1</b></div>
  </div>
  <i class="ul ul1"></i><i class="ul ul2"></i>
</div>

<div class="sogou">
  <svg class="slogo" viewBox="0 0 28 28"><path d="M2 5l23-4 3 21-23 5z" fill="#ef4a15"/><path d="M21 8H10c-3 0-2 5 1 5h6c3 0 3 6-1 6H7" fill="none" stroke="#fff" stroke-width="3.600"/></svg>
  <span class="zh">中</span>
  <svg class="si" viewBox="0 0 18 18"><circle cx="4" cy="6" r="2.200" fill="none" stroke="#1a70b8" stroke-width="1.500"/><path d="M13 7q1 4-3 7" stroke="#1a70b8" stroke-width="2.200" fill="none"/></svg>
  <svg class="si" viewBox="0 0 18 18"><rect x="6" y="0" width="6" height="11" rx="3" fill="#1a70b8"/><path d="M3 7c0 7 12 7 12 0M9 13v4M5 17h8" fill="none" stroke="#1a70b8" stroke-width="1.500"/></svg>
  <svg class="si wd" viewBox="0 0 20 18"><rect y="2" width="20" height="14" rx="2" fill="#1a70b8"/><path d="M3 6h14M3 9h14" stroke="#fff" stroke-dasharray="1.500 1"/><path d="M5 12.500h10" stroke="#fff"/></svg>
  <svg class="si wd" viewBox="0 0 20 18"><circle cx="8" cy="5" r="3.500" fill="#a8bccb"/><path d="M1 16c0-7 12-7 12 0z" fill="#a8bccb"/><rect x="12" y="10" width="8" height="6" fill="#dde5ec" stroke="#a8bccb"/></svg>
  <svg class="si" viewBox="0 0 18 18"><path d="M5 1L0 5l3 3 2-1v10h8V7l2 1 3-3-5-4-2 2H8z" fill="#1a70b8"/></svg>
  <svg class="si" viewBox="0 0 18 18"><path d="M2 15L9 7c-1-4 2-7 6-6l-3 3 2 2 3-3c1 4-2 7-6 6l-7 8z" fill="#1a70b8"/></svg>
</div>

<div class="netw">
  <div class="pill">
    <div class="sp"><svg class="ua" viewBox="0 0 8 10"><path d="M4 0l4 5H5.500v5h-3V5H0z" fill="#e86a50"/></svg><span>0.04K/s</span></div>
    <div class="sp"><svg class="ua" viewBox="0 0 8 10"><path d="M4 10l4-5H5.500V0h-3v5H0z" fill="#3a9a50"/></svg><span>0.04K/s</span></div>
    <div class="plusb">+<i class="reddot"></i></div>
  </div>
  <div class="ball"><i class="ballt"></i><span>69%</span></div>
</div>
</body>
</html>
```

FILE: styles.css
```css
*{box-sizing:border-box}
html,body{margin:0;padding:0}
body{width:1366px;height:768px;overflow:hidden;position:relative;background:#f0f0f0;color:#000;font:12px/16px "Open Sans","Noto Sans CJK SC",sans-serif;display:flex;flex-direction:column}
.sprite{position:absolute;width:0;height:0}
.tiny{font:6px "Liberation Mono",monospace;fill:#000}
u{text-decoration:none;font-family:"Liberation Mono",monospace;font-size:10px}
.i{width:16px;height:16px;flex:none;display:block}
.m1{margin-left:1px}.m2{margin-left:2px}.m3{margin-left:3px}.m4{margin-left:4px}.m5{margin-left:5px}.m6{margin-left:6px}.m7{margin-left:7px}.m8{margin-left:8px}.m9{margin-left:9px}.m10{margin-left:10px}.m12{margin-left:12px}.m20{margin-left:20px}.m30{margin-left:30px}.m36{margin-left:36px}.m37{margin-left:37px}.m41{margin-left:41px}.m95{margin-left:95px}
.t{display:flex;align-items:center;flex:none;white-space:nowrap}
.t .i{margin-right:4px}
.off{color:#8a8a8a}
.dd{display:block;flex:none;width:0;height:0;border-style:solid;border-width:3px 2.5px 0;border-color:#222 transparent transparent}
.gd{border-top-color:#aaa}
.sep{display:block;flex:none;width:1px;height:18px;background:#c4c4c4}
.grip{display:block;flex:none;width:3px;margin-left:3px;height:18px;background:repeating-linear-gradient(#b0b0b0 0 2px,transparent 2px 4px)}
.more{font-size:14px;line-height:14px;margin-top:-6px;flex:none}
.seg{display:flex;align-items:center;background:linear-gradient(#fcfcfc,#f4f4f4);flex:none;border-radius:2px}

/* title and menu */
.title{height:23px;background:#fff;display:flex;align-items:center;flex:none;position:relative}
.tlogo{width:16px;height:16px;margin-left:3px}
.ttext{margin-left:4px;white-space:nowrap;letter-spacing:.31px}
.wbtns{margin-left:auto;display:flex;align-items:center}
.wb{width:10px;height:10px;display:block;margin-left:36px}
.wb:last-child{margin-right:20px}
.menubar{height:30px;background:linear-gradient(#fff,#f7f7f7);display:flex;align-items:center;padding-left:6px;flex:none}
.mi{margin-right:11.6px;white-space:nowrap}
.mnew{margin-left:-3px}
.graybk{flex:none;width:186px;margin-left:8px;height:30px;background:#f5f5f5;border-radius:2px;padding:7px 0 0 44px;white-space:nowrap;overflow:hidden}
.acct{margin-left:7px}

/* top toolbars */
.tb1{height:30px;display:flex;align-items:center;flex:none}
.tb1 .seg{height:30px}
.s1{width:151px;padding-left:5px}
.s2{margin-left:2px;width:547px;padding-left:4px;overflow:hidden}
.s3{margin-left:3px;width:660px;padding-left:4px;overflow:hidden}
.sig{width:16px;margin-right:4px;text-align:center;font:bold 14px "Liberation Serif",serif}
.act{background:#fff;height:28px;margin-left:-3px;padding-left:3px;padding-right:4px}

.main{display:flex;flex:none;height:623px}
.side{width:140px;flex:none;padding-top:1px;display:flex;flex-direction:column}
.sidehead{height:16px;background:#0058e0;color:#fff;display:flex;align-items:center;flex:none}
.shtitle{flex:1;font-size:13px;letter-spacing:.5px;white-space:nowrap}
.pin{width:10px;height:10px;margin-right:7px;display:block}
.pin:last-child{margin-right:4px}
.sbtn{height:23px;background:linear-gradient(#f2f2f2,#ececec);border:1px solid #b0b0b0;text-align:center;line-height:21px;flex:none}
.sbtn.b{height:22px;line-height:20px}
.tpanel{height:515px;margin:0 1px 0 2px;border:1px solid #8a8a8a;background:#fff;display:flex;flex-direction:column;flex:none}
.ttool{height:26px;border-bottom:1px solid #a0a0a0;background:#fff;display:flex;align-items:center;flex:none;padding-left:3px;gap:8px}
.plus{width:16px;height:16px;display:block}
.tbody{display:flex;flex:1;min-height:0}
.tree{width:117px;flex:none;padding-top:1px;overflow:hidden;position:relative;font-family:"Noto Sans CJK SC",sans-serif}
.tree::before{content:"";position:absolute;left:12px;top:0;height:400px;border-left:1px dotted #555}
.r{height:16px;display:flex;align-items:center;padding-left:8px;white-space:nowrap;position:relative}
.r::before{content:"";position:absolute;left:12px;top:7px;width:10px;border-top:1px dotted #777}
.c{padding-left:43px}
.c::before{left:32px;width:10px}
.c::after{content:"";position:absolute;left:32px;top:-1px;height:18px;border-left:1px dotted #777}
.r .i{margin-right:5px}
.c .i{margin-right:4px}
.c.s .lb{background:#ddd}
.c.s .i{background:#ddd;margin-right:0;width:20px;padding-left:2px;margin-left:-2px}
.r>.i{position:relative;z-index:1}
.lb{position:relative;z-index:1;background:#fff}
.ch{display:block;flex:none;width:6px;height:6px;border-top:1.500px solid #aaa;border-right:1.500px solid #aaa;transform:rotate(45deg);margin:0 10px 0 -1px;background:#fff;position:relative;z-index:1}
.ch.o{border-color:#555;transform:rotate(135deg)}
.r .cadi{margin-left:5px;margin-right:0}
.nw{background:#ffe400;font:bold 10px/10px "Liberation Sans",sans-serif;margin-left:1px;align-self:flex-start;margin-top:0;color:#000}
.vbar{width:15px;flex:none;background:#f0f0f0;display:flex;flex-direction:column}
.vtrack{flex:1;display:flex;flex-direction:column;justify-content:flex-end;padding-bottom:2px}
.vthumb{height:360px;background:#cdcdcd}
.ar{display:block;width:15px;height:16px;flex:none;position:relative}
.ar::before{content:"";position:absolute;left:4px;top:5px;width:6px;height:6px;border-top:1.500px solid #555;border-left:1.500px solid #555}
.ar.u::before{transform:rotate(45deg);top:7px}
.ar.d::before{transform:rotate(225deg);top:3px}
.ar.l::before{transform:rotate(-45deg)}
.ar.r2::before{transform:rotate(135deg);left:2px}
.hbar{height:18px;flex:none;margin-bottom:1px;background:#f0f0f0;display:flex;align-items:center;padding-left:3px;width:117px}
.hthumb{width:63px;height:17px;background:#cdcdcd;margin-left:0;margin-right:auto}

.right{width:1226px;flex:none;padding-left:4px}
.tb2,.tb3,.tb4{display:flex;align-items:flex-end;padding-left:1px}
.tb2{height:27px}.tb2 .seg{height:26px;padding-right:4px}
.tb3{height:28px}.tb3 .seg{height:27px;padding-right:4px}
.tb4{height:30px;padding-bottom:1px}.tb4 .seg{height:27px;padding-right:6px}
.combo{display:flex;align-items:center;justify-content:space-between;background:#fff;height:24px;padding:0 3px 0 2px;flex:none}
.cw1{width:57px}.cw2{width:68px}.cw3{width:55px;justify-content:flex-end}.cw4{width:47px;padding:0 1px}
.box{background:#dce9f6;border:1px solid #3c8dd0;height:24px;padding:0 3px}
.sel{width:51px;padding-left:5px}
.sel .i{margin-right:1px}
.gripseg{width:29px}
.canvas{display:block;width:1222px;height:305px;font-family:"Liberation Sans",sans-serif}
.axl text{font-size:14px;text-anchor:middle}
.dimt text{font-size:17px}

.snapbar{height:27px;display:flex;align-items:center;padding-left:2px}
.snapL{width:209px;height:27px}
.snapR{margin-left:266px;height:25px;width:410px;padding-left:8px}
.blu{border:1px solid #0a78d0;background:#dbe9f8;height:23px;padding:0 3px;margin-right:2px}
.blu .i{margin-right:2px}
.blu+.blu{margin-right:0;width:75px}
.gt{color:#8a8a8a;font-size:12px}
.lx{width:19px}
.lm{width:27px;color:#8a8a8a}
.ly{width:17px}
.lm2{width:27px}
.inp{display:flex;align-items:center;justify-content:flex-end;height:23px;border:1px solid #888;color:#888;background:#fff;padding-right:17px;position:relative;flex:none;font-size:12px}
.iw1{width:58px}.iw2{width:57px}.iw3{width:68px}
.spin{position:absolute;right:4px;top:3px;width:7px;height:15px;background:linear-gradient(#f0f0f0,#f0f0f0)}
.spin::before{content:"";position:absolute;left:1px;top:1px;border-style:solid;border-width:0 2.500px 3px;border-color:transparent transparent #666}
.spin::after{content:"";position:absolute;left:1px;bottom:1px;border-style:solid;border-width:3px 2.500px 0;border-color:#666 transparent transparent}
.cb{display:block;flex:none;width:11px;height:11px;border:1px solid #888;background:#fff}
.deg{line-height:12px;margin-top:-6px}

.gridpanel{height:206px;display:flex}
.gleft{width:12px;flex:none;padding-top:6px}
.gx{display:block;width:10px;height:10px;margin-left:1px}
.gdots{display:block;height:184px;width:6px;margin:2px 0 0 2px;background-image:radial-gradient(circle,#bbb 1px,transparent 1.300px);background-size:3px 4px}
.gmain{flex:none;width:1210px;padding-top:8px}
.gtb{height:25px;padding-left:4px;width:1208px}
.gbox{width:1209px;height:173px;border:1px solid #b0b0b0;background:#fff;display:flex;flex-direction:column;margin-top:0}
.grid{border-collapse:collapse;table-layout:fixed;width:1207px;flex:none}
.grid th,.grid td{padding:0 0 0 2px;border:1px solid #c0c0c0;overflow:hidden;white-space:nowrap;font-weight:400;line-height:16px}
.grid thead th{height:18px;background:linear-gradient(#fff,#ececec);text-align:center;padding:0;color:#111}
.grid th:nth-child(1){width:33px}.grid th:nth-child(2){width:73px}.grid th:nth-child(3){width:57px}.grid th:nth-child(4){width:35px}.grid th:nth-child(5){width:33px}.grid th:nth-child(6){width:201px}.grid th:nth-child(7){width:166px}.grid th:nth-child(8){width:156px}.grid th:nth-child(9){width:81px}.grid th:nth-child(10){width:62px}.grid th:nth-child(11){width:37px}.grid th:nth-child(12){width:40px}.grid th:nth-child(13){width:49px}.grid th:nth-child(14){width:61px}.grid th:nth-child(15){width:60px}.grid th:nth-child(16){width:63px}
.grid thead th.ah{background:linear-gradient(#fde3b0,#f5bf66);color:#3c0a78}
.r1 td{height:41px;background:#c9fdd7}
.r1 .rh{background:#ffd68c;color:#3c0a78;text-align:center;padding:0}
.r2 td,.r2 th{height:19px;background:#fff}
.rh2{text-align:center;padding:0 !important}
.cur{background:#aeeadb !important;border-left:2px solid #000 !important}
.cur2{border-left:2px solid #000 !important}
.ctr{text-align:center;padding:0 !important}
.gb{width:12px;height:12px;vertical-align:middle}
.fig{padding:0 !important}
.shape{display:block;width:201px;height:40px;font-family:"Liberation Sans",sans-serif}
.sn{font-size:11px}
.gsp{flex:1}
.gscroll{height:16px;flex:none;margin-bottom:1px;background:#f0f0f0;display:flex;align-items:center}
.gscroll .ar{height:16px}
.gthumb{width:778px;height:15px;background:#cdcdcd;margin:0 auto 0 2px}

.status{height:20px;margin-top:2px;display:flex;gap:2px;flex:none;font-family:"Noto Sans CJK SC",sans-serif}
.sc{display:block;background:linear-gradient(#fff,#f0f0f0);border:1px solid #e0e0e0;padding:0 1px;line-height:18px;white-space:nowrap;flex:none;font-family:"Liberation Mono","Noto Sans CJK SC",monospace;font-size:10px}
.w1{width:148px}.w2{width:78px}.w3{width:98px}.w4{width:48px}.w5{width:914px}.w6{width:70px;margin-left:0}
.w2,.w3,.w5{font-family:"Noto Sans CJK SC",sans-serif;font-size:12px}
.taskbar{height:40px;background:#071017;display:flex;align-items:center;flex:none;color:#fff;position:relative}
.start{width:48px;height:40px;background:#000;display:flex;align-items:center;justify-content:center;flex:none}
.win{width:16px;height:16px}
.search{width:344px;height:40px;background:#333;display:flex;align-items:center;padding-left:8px;flex:none}
.cort{width:22px;height:22px}
.stxt{margin-left:6px;font-size:14px;color:#8a8a8a;font-family:"Noto Sans CJK SC",sans-serif;white-space:nowrap}
.mic{width:14px;height:20px;margin-left:auto;margin-right:14px}
.apps{display:flex;align-items:center;height:40px;padding-left:14px;flex:none;width:398px}
.ap{width:24px;height:24px;flex:none;margin-right:26px}
.active{margin-left:-14px;width:48px;height:40px;background:#2e3a42;border-bottom:2px solid #76b9ed;display:flex;align-items:center;justify-content:center;flex:none}
.ap0{width:24px;height:24px}
.tray{display:flex;align-items:center;height:40px;flex:1}
.cpu,.clock{display:flex;flex-direction:column;align-items:center;line-height:18px;font-family:"Noto Sans CJK SC",sans-serif;white-space:nowrap;flex:none}
.cpu{width:60px;margin-left:196px}
.tr{width:14px;height:9px;flex:none}
.tr2{width:18px;height:18px;flex:none}
.kb{width:24px;height:16px;flex:none}
.clock{width:70px}
.notif{margin-left:25px;position:relative;width:16px;height:16px;flex:none}
.nic{width:16px;height:16px;display:block}
.badge{position:absolute;left:0;top:7px;width:17px;height:17px;border-radius:50%;background:#333;border:1px solid #666;color:#fff;font:bold 12px/15px "Liberation Sans",sans-serif;text-align:center}
.ul{position:absolute;bottom:0;height:2px;background:#76b9ed}
.ul1{left:648px;width:38px}
.ul2{left:697px;width:38px}

/* floating input and network widgets */
.sogou{position:absolute;left:470px;top:58px;width:162px;height:23px;background:rgba(252,252,255,.97);border:1px solid #bccad8;display:flex;align-items:center;padding-left:10px;gap:5px}
.slogo{position:absolute;left:-22px;top:-3px;width:28px;height:28px}
.zh{color:#1a70b8;font:bold 15px "Noto Sans CJK SC",sans-serif;line-height:18px;margin-right:2px}
.si{width:16px;height:16px;display:block;flex:none}
.wd{width:18px}
.netw{position:absolute;left:983px;top:30px;width:127px;height:46px}
.pill{position:absolute;left:23px;top:3px;right:0;height:39px;border-radius:20px;background:linear-gradient(#f7f7f7,#e4e4e4);border:1px solid #bbb;box-shadow:0 2px 6px rgba(0,0,0,.35);padding:3px 0 0 27px}
.sp{display:flex;align-items:center;gap:7px;height:15px;font-size:10px;color:#222;white-space:nowrap;line-height:15px}
.ua{width:8px;height:10px;display:block}
.plusb{position:absolute;left:76px;top:9px;width:19px;height:19px;border-radius:50%;background:radial-gradient(circle at 50% 30%,#5ba0ee,#1f62c0);color:#fff;font:bold 16px/18px "Liberation Sans",sans-serif;text-align:center}
.reddot{position:absolute;left:11px;top:-5px;width:9px;height:9px;border-radius:50%;background:#dd2b2b;border:1px solid #a81818}
.ball{position:absolute;left:0;top:0;width:46px;height:46px;border-radius:50%;background:linear-gradient(#45c85c,#2fb04a);border:2px solid #dedede;box-shadow:0 2px 6px rgba(0,0,0,.45);color:#fff;text-align:center;font-size:16px;line-height:40px;overflow:hidden}
.ballt{position:absolute;left:0;right:0;top:0;height:12px;background:linear-gradient(#2a7a52,#2f8a58)}
.ball span{position:relative}
```
